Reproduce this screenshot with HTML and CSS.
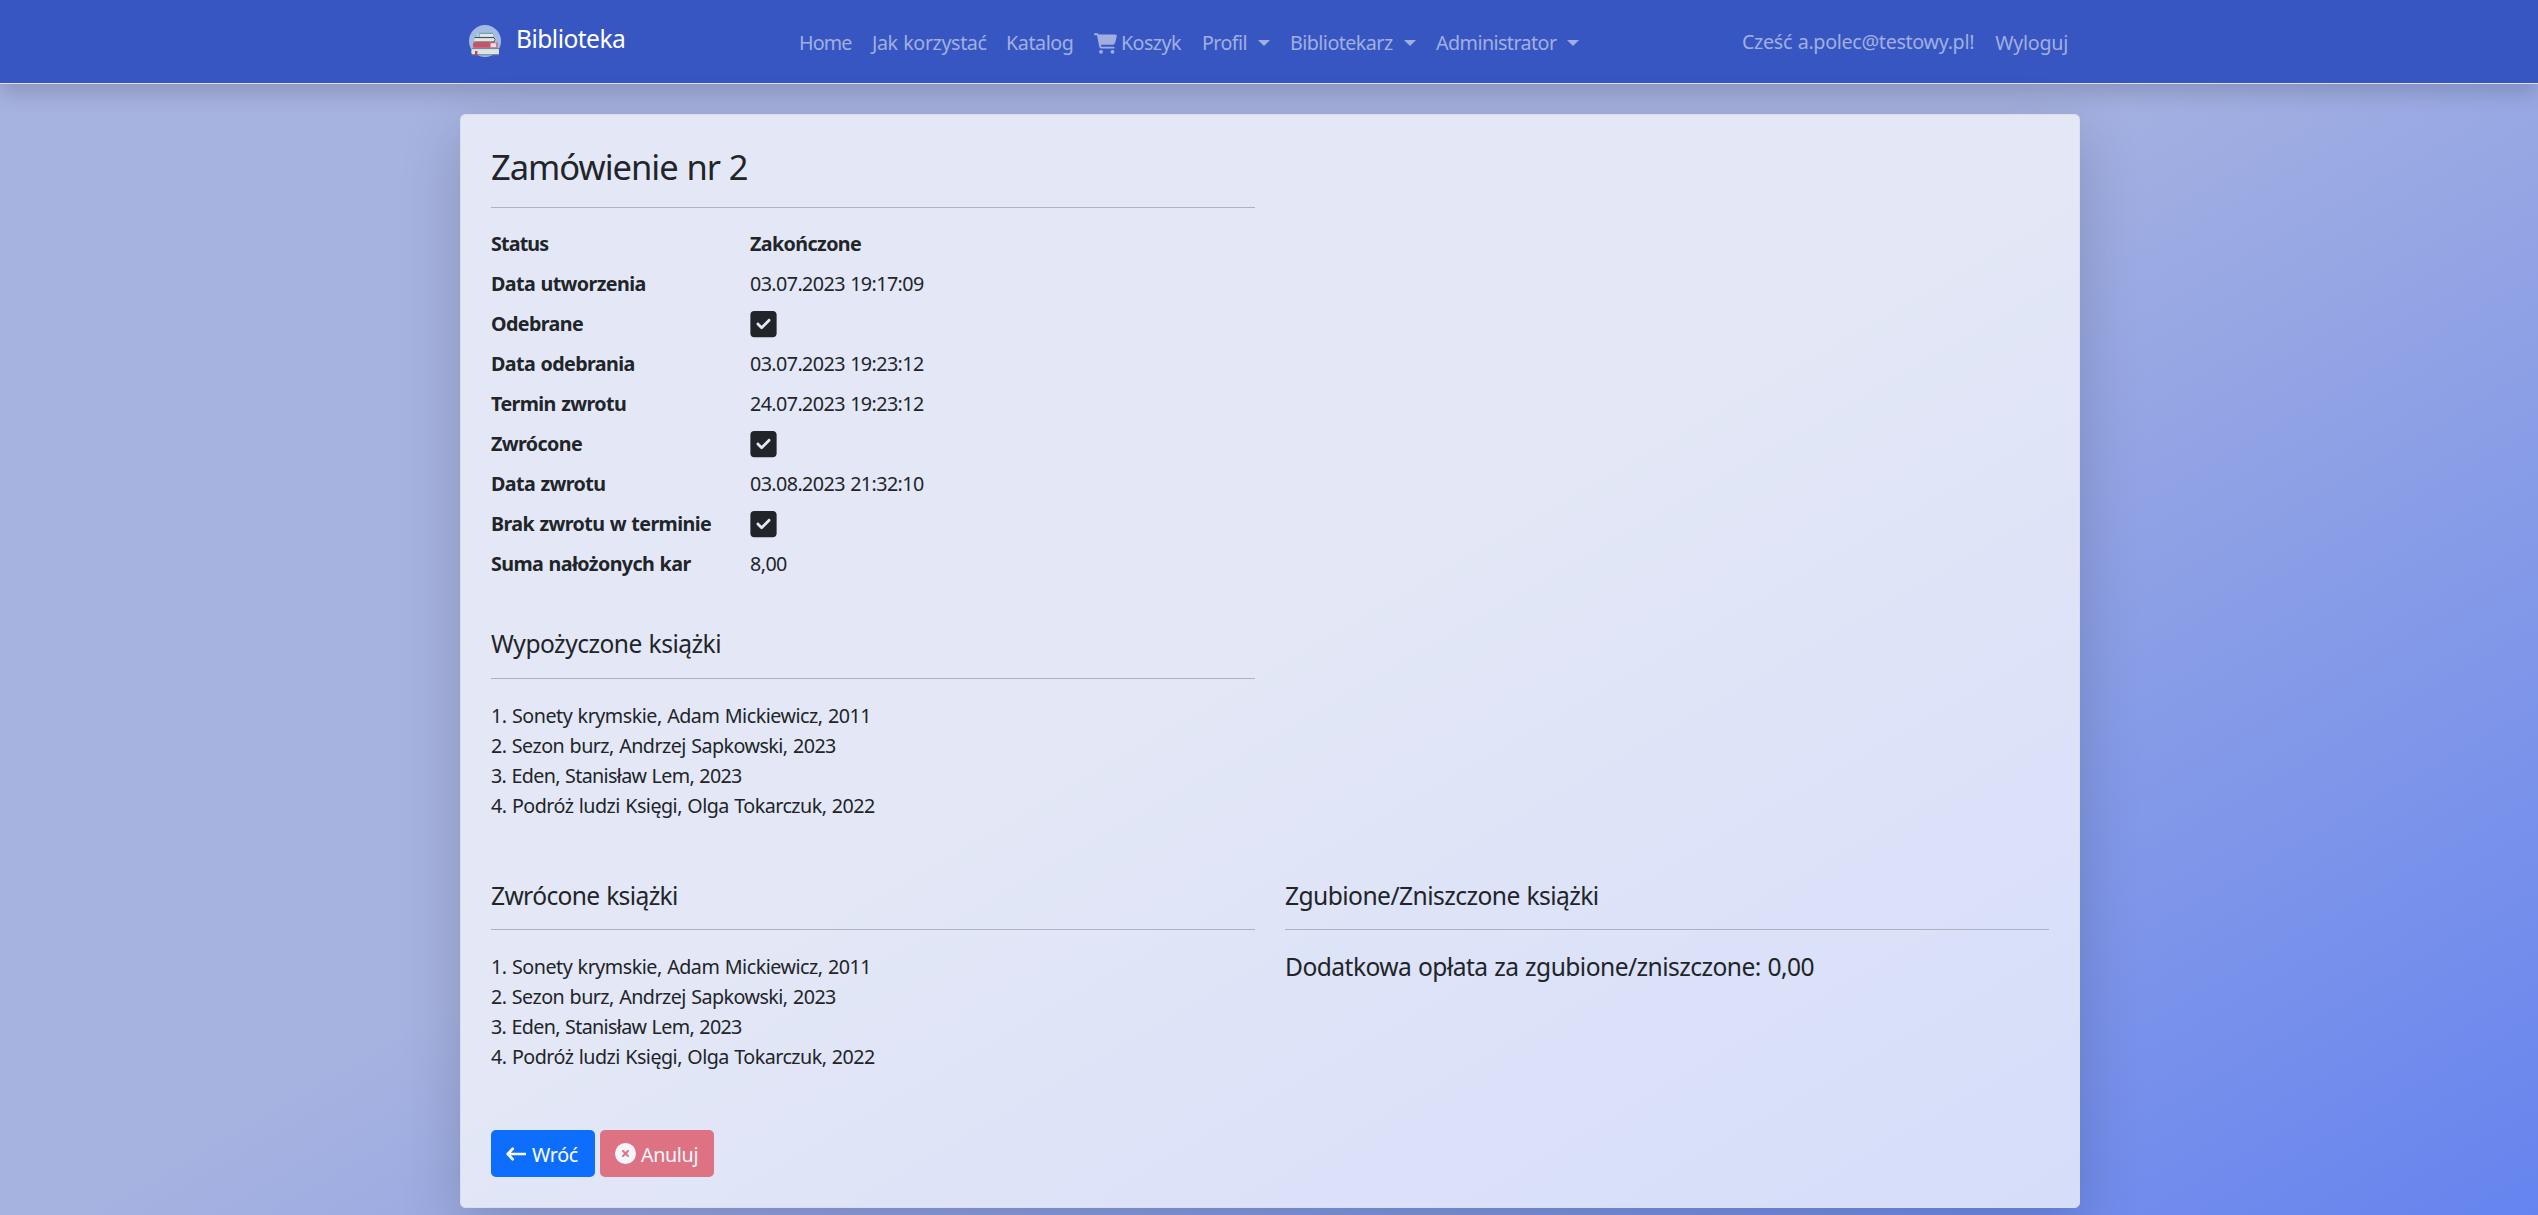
FILE: index.html
```html
<!DOCTYPE html>
<html lang="pl">
<head>
<meta charset="utf-8">
<title>Biblioteka</title>
<link rel="stylesheet" href="styles.css">
</head>
<body>
<svg class="sprite" aria-hidden="true">
  <symbol id="check" viewBox="0 0 448 512"><path d="M64 32C28.700 32 0 60.700 0 96V416c0 35.300 28.700 64 64 64H384c35.300 0 64-28.700 64-64V96c0-35.300-28.700-64-64-64H64zM337 209L209 337c-9.400 9.400-24.600 9.400-33.900 0l-64-64c-9.400-9.400-9.400-24.600 0-33.900s24.600-9.400 33.900 0l47 47L303 175c9.400-9.400 24.600-9.400 33.900 0s9.400 24.600 0 33.900z"/></symbol>
</svg>
<header class="navbar">
  <nav class="navbar-inner">
    <a class="brand">
      <svg class="logo" viewBox="0 0 32 32">
        <circle cx="16" cy="16" r="16" fill="#a3bbe3"/>
        <path d="M10 8.200h14v3.600H10a1.800 1.800 0 0 1 0-3.600z" fill="#e4e6e4"/>
        <path d="M24 8.300H10.500q-1.500 1.500 0 3.500" fill="none" stroke="#4f9aa2" stroke-width="1"/>
        <path d="M5.500 12.500H25a2 2 0 0 1 0 4.500H5.500z" fill="#e6e5e3"/>
        <path d="M5.500 12.600H25q2.500 2 0 4.400H5.500" fill="none" stroke="#3c444c" stroke-width="1"/>
        <path d="M4.500 17.500h24v5.300h-24q-1.500-2.600 0-5.300z" fill="#cb5266"/>
        <path d="M21.500 18.200h5.800v4h-5.800z" fill="#e9dfe2"/>
        <path d="M3 23.800h27v5.600H3q-1.500-2.800 0-5.600z" fill="#e3e2e2"/>
        <path d="M30 23.600H3M2.500 29.800H30" stroke="#5a7f9c" stroke-width=".9"/>
        <path d="M6 26h2.400v4.800l-1.200-1-1.200 1z" fill="#d23c4c"/>
      </svg>
      <span>Biblioteka</span>
    </a>
    <ul class="menu">
      <li class="n-home">Home</li>
      <li class="n-how">Jak korzystać</li>
      <li class="n-catalog">Katalog</li>
      <li class="n-cart"><svg class="cart" viewBox="0 0 576 512"><path d="M0 24C0 10.700 10.700 0 24 0H69.500c22 0 41.500 12.800 50.600 32h411c26.300 0 45.500 25 38.600 50.400l-41 152.300c-8.500 31.400-37 53.300-69.500 53.300H170.700l5.400 28.500c2.200 11.300 12.100 19.500 23.600 19.500H488c13.300 0 24 10.700 24 24s-10.700 24-24 24H199.700c-34.600 0-64.300-24.600-70.700-58.500L77.400 54.500c-.7-3.800-4-6.500-7.900-6.500H24C10.700 48 0 37.300 0 24zM128 464a48 48 0 1 1 96 0 48 48 0 1 1-96 0zm336-48a48 48 0 1 1 0 96 48 48 0 1 1 0-96z"/></svg><span>Koszyk</span></li>
      <li class="n-profile drop">Profil</li>
      <li class="n-lib drop">Bibliotekarz</li>
      <li class="n-admin drop">Administrator</li>
    </ul>
    <ul class="account">
      <li class="hello">Cześć a.polec@testowy.pl!</li>
      <li class="logout">Wyloguj</li>
    </ul>
  </nav>
</header>
<main class="card">
  <section class="half">
    <h1>Zamówienie nr 2</h1>
    <hr>
    <dl>
      <dt class="t-status">Status</dt><dd><b>Zakończone</b></dd>
      <dt>Data utworzenia</dt><dd>03.07.2023 19:17:09</dd>
      <dt>Odebrane</dt><dd><svg class="tick"><use href="#check"/></svg></dd>
      <dt>Data odebrania</dt><dd>03.07.2023 19:23:12</dd>
      <dt>Termin zwrotu</dt><dd>24.07.2023 19:23:12</dd>
      <dt>Zwrócone</dt><dd><svg class="tick"><use href="#check"/></svg></dd>
      <dt>Data zwrotu</dt><dd>03.08.2023 21:32:10</dd>
      <dt>Brak zwrotu w terminie</dt><dd><svg class="tick"><use href="#check"/></svg></dd>
      <dt>Suma nałożonych kar</dt><dd>8,00</dd>
    </dl>
  </section>
  <section class="half borrowed">
    <h2>Wypożyczone książki</h2>
    <hr>
    <ul class="books">
      <li class="b1">1. Sonety krymskie, Adam Mickiewicz, 2011</li>
      <li class="b2">2. Sezon burz, Andrzej Sapkowski, 2023</li>
      <li class="b3">3. Eden, Stanisław Lem, 2023</li>
      <li class="b4">4. Podróż ludzi Księgi, Olga Tokarczuk, 2022</li>
    </ul>
  </section>
  <div class="columns">
    <section>
      <h2 class="h-returned">Zwrócone książki</h2>
      <hr>
      <ul class="books">
        <li class="b1">1. Sonety krymskie, Adam Mickiewicz, 2011</li>
        <li class="b2">2. Sezon burz, Andrzej Sapkowski, 2023</li>
        <li class="b3">3. Eden, Stanisław Lem, 2023</li>
        <li class="b4">4. Podróż ludzi Księgi, Olga Tokarczuk, 2022</li>
      </ul>
    </section>
    <section>
      <h2 class="h-lost">Zgubione/Zniszczone książki</h2>
      <hr>
      <h2 class="h-lost">Dodatkowa opłata za zgubione/zniszczone: 0,00</h2>
    </section>
  </div>
  <div class="actions">
    <a class="btn back"><svg viewBox="0 0 20 20"><path d="M6.700 4.800L1.700 10l5 5.200M2.200 10H19" fill="none" stroke="currentColor" stroke-width="2.700" stroke-linecap="round" stroke-linejoin="round"/></svg><span>Wróć</span></a>
    <a class="btn cancel"><svg viewBox="0 0 512 512"><path fill="currentColor" d="M256 512A256 256 0 1 0 256 0a256 256 0 1 0 0 512zM175 175c9.400-9.400 24.600-9.400 33.900 0l47 47 47-47c9.400-9.400 24.600-9.400 33.900 0s9.400 24.600 0 33.900l-47 47 47 47c9.400 9.400 9.400 24.600 0 33.900s-24.600 9.400-33.900 0l-47-47-47 47c-9.400 9.400-24.600 9.400-33.900 0s-9.400-24.600 0-33.900l47-47-47-47c-9.400-9.400-9.400-24.600 0-33.900z"/></svg><span>Anuluj</span></a>
  </div>
</main>
</body>
</html>
```
FILE: styles.css
```css
* { box-sizing: border-box; }
html { height: 100%; }
body {
  margin: 0;
  min-height: 100%;
  font: 400 19.7px/30px "Noto Sans", "Open Sans", sans-serif;
  word-spacing: .8px;
  color: #212529;
  background: linear-gradient(150deg, #a6b2e0 47%, #6684ef 100%) fixed;
  overflow: hidden;
}
ul, dl, dd, h1, h2 { margin: 0; padding: 0; list-style: none; font-weight: 400; }
.sprite { display: none; }

/* Top bar */
.navbar {
  height: 84px;
  background: #3756c2;
  border-bottom: 1px solid #dee2f0;
  box-shadow: 0 10px 20px rgba(0, 0, 0, .15);
}
.navbar-inner {
  width: 1620px;
  height: 83px;
  margin: 0 auto;
  padding: 0 11px 0 10px;
  display: flex;
  align-items: center;
  color: #a1afe0;
  white-space: nowrap;
}
.brand {
  display: flex;
  align-items: center;
  gap: 15px;
  width: 332px;
  color: #fff;
  font-size: 24.6px;
  letter-spacing: -.54px;
}
.brand span { margin-top: -5px; }
.logo { width: 32px; height: 32px; margin-top: -1px; }
.menu { display: flex; margin-top: 3px; line-height: 30px; }
.menu li { display: flex; align-items: center; flex: none; }
.n-home { width: 73px; letter-spacing: -.85px; margin-left: -2px; }
.n-how { width: 134px; letter-spacing: -.4px; }
.n-catalog { width: 88px; letter-spacing: -.42px; }
.n-cart { width: 108px; letter-spacing: -.58px; gap: 4px; }
.cart { width: 23px; height: 21px; fill: currentColor; }
.n-profile { width: 88px; letter-spacing: -.6px; }
.n-lib { width: 146px; letter-spacing: -.55px; }
.n-admin { letter-spacing: -.57px; }
.drop::after {
  content: "";
  margin-left: 11px;
  border: 6px solid transparent;
  border-top-color: currentColor;
  border-bottom: 0;
}
.account { display: flex; gap: 21px; margin-left: auto; }
.hello { letter-spacing: -.31px; margin-top: 2px; }
.logout { margin-top: 3px; letter-spacing: -.27px; }

/* Order card */
.card {
  width: 1620px;
  height: 1094px;
  margin: 30px 458px 0 460px;
  padding: 30px;
  border: 1px solid #dadee6;
  border-radius: 5px;
  background: rgba(255, 255, 255, .7);
  background-clip: padding-box;
  box-shadow: 0 20px 60px rgba(0, 0, 0, .175);
}
.half { width: 764px; }
h1 { height: 42px; padding-top: 1px; font-size: 34.5px; line-height: 42px; letter-spacing: -1px; }
h2 { height: 30px; padding-top: 1px; font-size: 24.6px; line-height: 30px; letter-spacing: -.52px; white-space: nowrap; }
hr { margin: 20px 0; border: 0; height: 1px; background: #aeb1c2; }
dl {
  display: grid;
  grid-template-columns: 259px 1fr;
  row-gap: 10px;
  grid-auto-rows: 30px;
}
dt, dd { padding-top: 1px; }
dt, b { font-weight: 700; letter-spacing: -.6px; }
dd { letter-spacing: -.58px; }
.t-status { letter-spacing: -.85px; }
.tick { display: block; width: 27px; height: 30px; fill: currentColor; }
.borrowed { margin-top: 50px; }
.books li { height: 30px; padding-top: 2px; }
.columns {
  display: grid;
  grid-template-columns: 764px 764px;
  gap: 30px;
  margin-top: 60px;
}
.columns h2 { padding-top: 2px; }
.h-returned { letter-spacing: -.64px; }
.h-lost { letter-spacing: -.55px; }
.b1 { letter-spacing: -.49px; }
.b2 { letter-spacing: -.54px; }
.b3 { letter-spacing: -.66px; }
.b4 { letter-spacing: -.52px; }

/* Buttons */
.actions { display: flex; gap: 5px; margin-top: 60px; }
.btn {
  display: flex;
  align-items: center;
  gap: 6px;
  height: 47px;
  padding-left: 15px;
  border-radius: 5px;
  color: #fff;
  letter-spacing: -.35px;
}
.btn svg { width: 20px; height: 20px; }
.btn span { padding-top: 2px; }
.back { width: 104px; background: #0d6efd; }
.cancel { width: 114px; gap: 5px; background: #dc3545; opacity: .65; }
.cancel svg { width: 21px; height: 21px; }
```
